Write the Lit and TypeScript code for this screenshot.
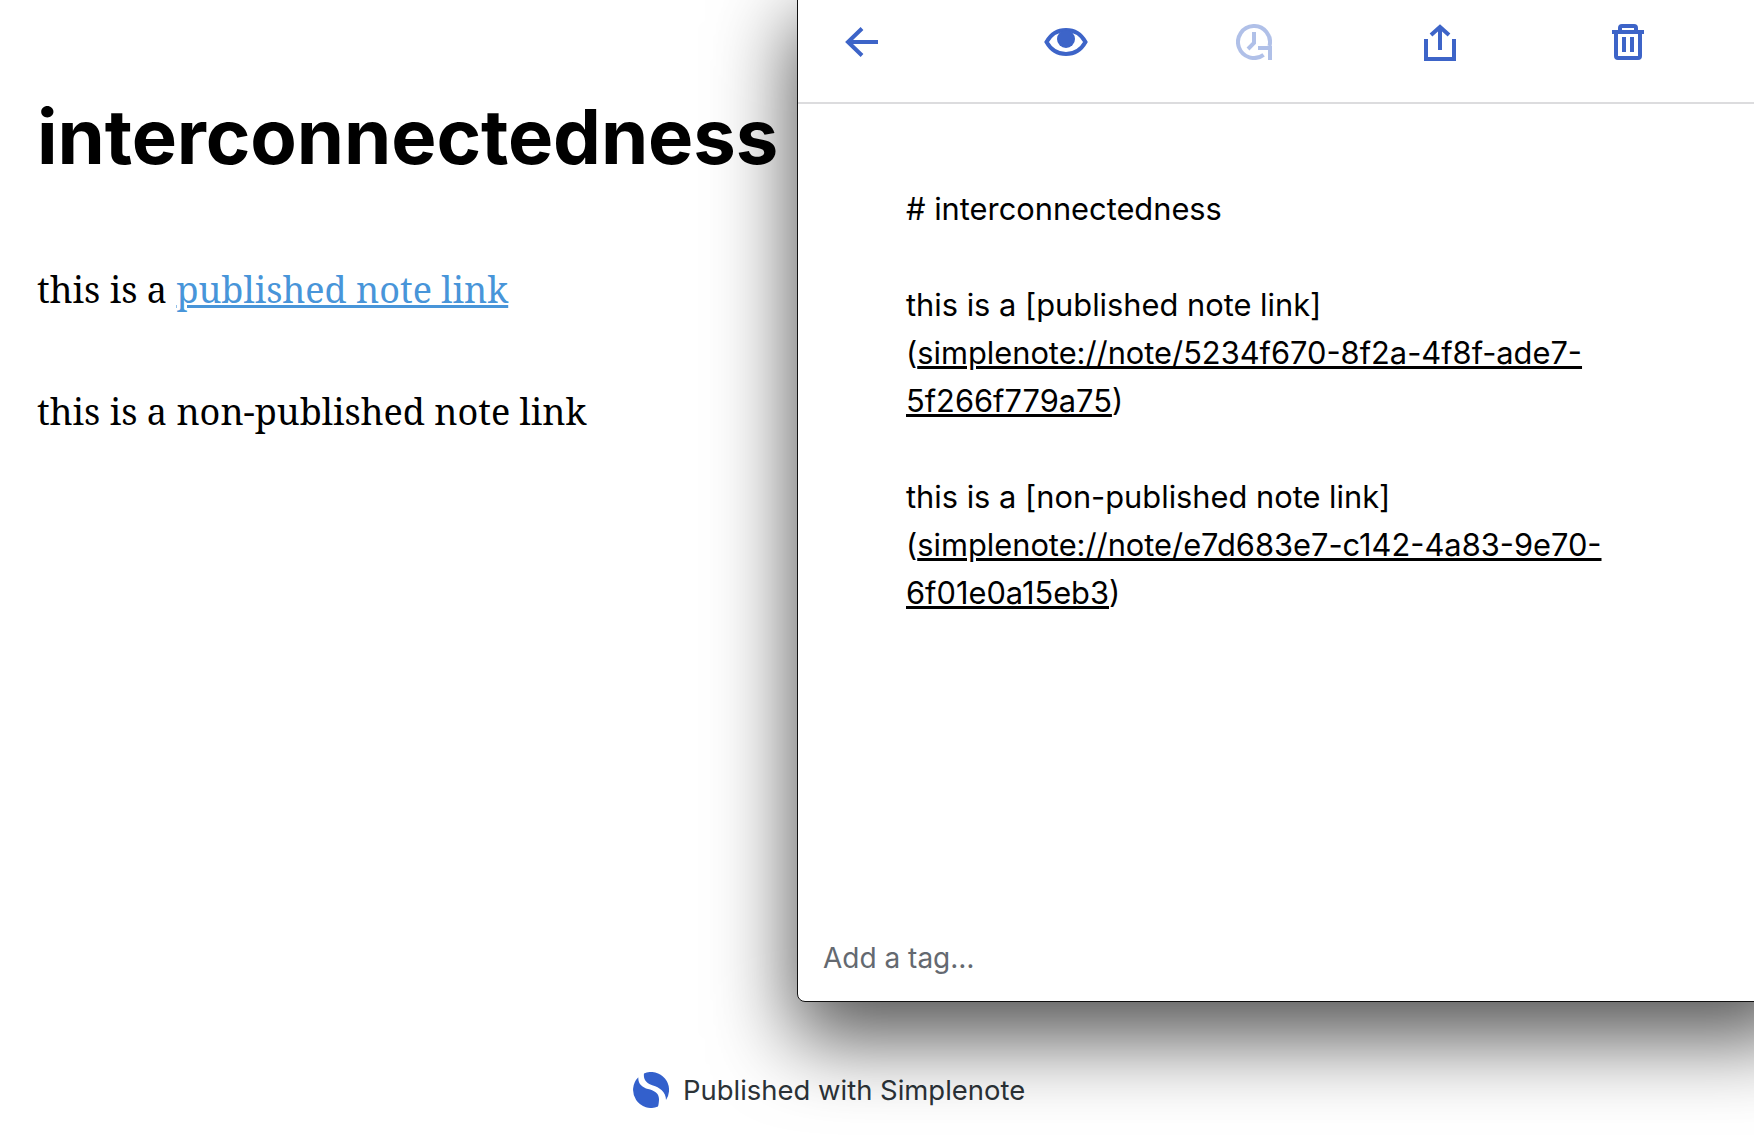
import { LitElement, html, css } from "lit";
import { customElement } from "lit/decorators.js";

@customElement("app-root")
export class AppRoot extends LitElement {
  static styles = css`
    :host { display: block; position: relative; width: 1754px; height: 1148px; overflow: hidden; background: #fff; color: #000; }
    .page { padding: 92px 0 0 37px; }
    h1 { margin: 0; font: 700 76px/88px Inter, sans-serif; letter-spacing: -0.12px; }
    p { margin: 0; font: 400 36px/48px "Noto Serif", "DejaVu Serif Condensed", "Liberation Serif", serif; }
    .p1 { margin-top: 86px; }
    .p2 { margin-top: 74px; }
    .page a { color: #4895d9; text-decoration: underline; }
    .footer { position: absolute; left: 633px; top: 1072px; display: flex; align-items: center; gap: 14px; font: 400 27.45px/36px Inter, sans-serif; color: #2c3338; }
    .window { position: absolute; left: 797px; top: -10px; width: 1000px; height: 1012px; box-sizing: border-box; background: #fff; border: 1px solid #111; border-radius: 8px; box-shadow: 0 34px 80px 4px rgba(0,0,0,.66); display: flex; flex-direction: column; }
    .toolbar { display: flex; align-items: center; height: 102px; padding: 0 0 9px 47px; border-bottom: 2px solid #dcdcde; flex: none; box-sizing: content-box; }
    .toolbar svg { display: block; flex: none; fill: none; stroke: #3d64c8; stroke-width: 4; }
    .toolbar .m-eye { margin-left: 166px; }
    .toolbar .m-hist { margin-left: 148px; opacity: .4; }
    .toolbar .m-share { margin-left: 152px; }
    .toolbar .m-trash { margin-left: 156px; }
    .note { padding: 81px 0 0 108px; font: 400 30.8px/48px Inter, sans-serif; color: #000; flex: 1; }
    .note div { min-height: 48px; white-space: nowrap; }
    .note u { text-decoration: underline; }
    .tag { padding: 0 0 25px 25px; font: 400 28px/36px Inter, sans-serif; color: #646970; }
    .logo-c { fill: #3360cc; }
  `;

  render() {
    return html`
      <div class="page">
        <h1>interconnectedness</h1>
        <p class="p1">this is a <a href="#">published note link</a></p>
        <p class="p2">this is a non-published note link</p>
      </div>
      <div class="footer">
        <svg width="36" height="36" viewBox="0 0 36 36"><path class="logo-c" d="M5.300 5.300C5 12 9.500 15.500 15 17C21 18.600 26.500 21 26 28C25.800 31 25.500 33 25 34.600A18 18 0 0 1 5.300 5.300Z"/><path class="logo-c" d="M11 1.400A18 18 0 0 1 33 28C33 20 26 15 20 13.500C14 12 10 8 11 1.400Z"/></svg>
        <span>Published with Simplenote</span>
      </div>
      <div class="window">
        <div class="toolbar">
          <svg width="33" height="30" viewBox="0 0 33 30"><path d="M33 15H3M17 1.500L3 15L17 28.500"/></svg>
          <svg class="m-eye" width="44" height="28" viewBox="0 0 44 28"><path d="M2.500 14C7 6 14 2 22 2S37 6 41.500 14C37 22 30 26 22 26S7 22 2.500 14Z"/><circle cx="22" cy="11" r="9" fill="#3d64c8" stroke="none"/></svg>
          <svg class="m-hist" width="36" height="36" viewBox="0 0 36 36"><path d="M33.500 22A16 16 0 1 0 27.600 30.800"/><path d="M18 8V19L12 25M22 24H34V36"/></svg>
          <svg class="m-share" width="32" height="37" viewBox="0 0 32 37"><path d="M2 15V35H30V15M16 26V3M7 11L16 3L25 11"/></svg>
          <svg class="m-trash" width="32" height="36" viewBox="0 0 32 36"><path d="M0 8H32M8 8V4Q8 2 10 2H22Q24 2 24 4V8M4 10V32Q4 34 6 34H26Q28 34 28 32V10M12 13V28M20 13V28"/></svg>
        </div>
        <div class="note">
          <div># interconnectedness</div>
          <div></div>
          <div>this is a [published note link]</div>
          <div>(<u>simplenote://note/5234f670-8f2a-4f8f-ade7-</u></div>
          <div><u>5f266f779a75</u>)</div>
          <div></div>
          <div>this is a [non-published note link]</div>
          <div>(<u>simplenote://note/e7d683e7-c142-4a83-9e70-</u></div>
          <div><u>6f01e0a15eb3</u>)</div>
        </div>
        <div class="tag">Add a tag…</div>
      </div>
    `;
  }
}
